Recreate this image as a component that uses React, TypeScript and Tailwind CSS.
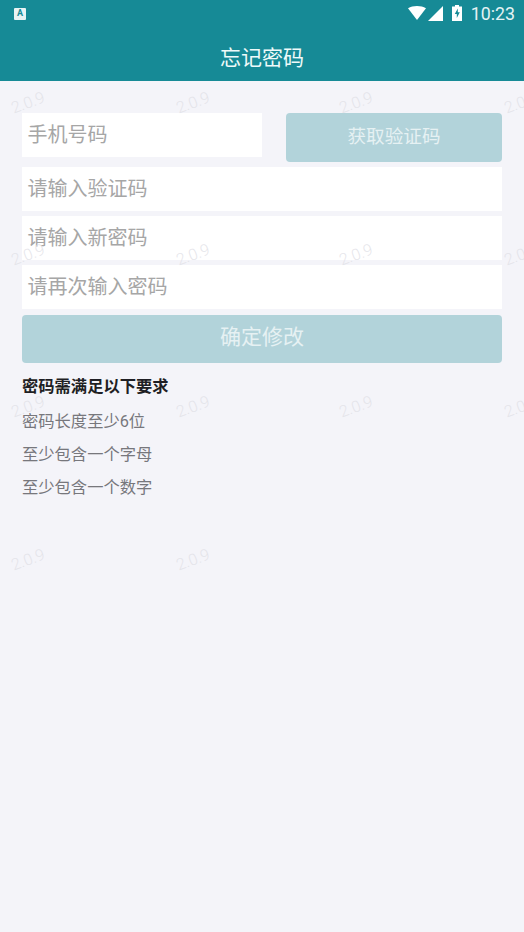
const cjk = "font-['Roboto','Noto_Sans_CJK_SC',sans-serif]";

const marks = [
  'left-[11px] top-[93px]',
  'left-[176px] top-[93px]',
  'left-[339px] top-[93px]',
  'left-[504px] top-[93px]',
  'left-[11px] top-[245px]',
  'left-[176px] top-[245px]',
  'left-[339px] top-[245px]',
  'left-[504px] top-[245px]',
  'left-[11px] top-[397px]',
  'left-[176px] top-[397px]',
  'left-[339px] top-[397px]',
  'left-[504px] top-[397px]',
  'left-[11px] top-[550px]',
  'left-[176px] top-[550px]',
];

function StatusBar() {
  return (
    <div className="flex h-[27px] items-center justify-between pl-[14px] pr-[9px]">
      {/* notification icon */}
      <div className="flex h-[12px] w-[12px] items-center justify-center rounded-[1px] bg-[#e8f3f4]">
        <span className="font-['Roboto',sans-serif] text-[9px] leading-none font-bold text-[#168a96]">A</span>
      </div>
      <div className="flex items-center">
        <svg width="18" height="14" viewBox="0 0 20 15" className="mr-[2px]" preserveAspectRatio="none">
          <path d="M0 2.500C2.800 0.900 6.200 0 10 0s7.200 0.900 10 2.500L10 15z" fill="#fff" />
        </svg>
        <svg width="15" height="15" viewBox="0 0 15 15" className="mr-[9px]">
          <path d="M15 0v15H0z" fill="#fff" />
        </svg>
        <svg width="10" height="16" viewBox="0 0 10 16" className="mr-[9px]">
          <path d="M3 0h4v1.500h3V16H0V1.500h3z" fill="#fff" />
          <path d="M5.800 3.500 2.800 9h2v4l3-5.800h-2z" fill="#168a96" />
        </svg>
        <span className="font-['Roboto',sans-serif] text-[17.8px] leading-none font-normal text-[#e4f3f4]">10:23</span>
      </div>
    </div>
  );
}

function Field({ placeholder, className }: { placeholder: string; className: string }) {
  return (
    <div className={`flex h-[44px] items-center bg-white pl-[5.500px] text-[20px] text-[#a6a6a6] ${className}`}>
      {placeholder}
    </div>
  );
}

export default function App() {
  return (
    <div className={`relative h-[932px] w-[524px] overflow-hidden bg-[#f4f4f9] ${cjk}`}>
      <header className="h-[81px] bg-[#168a96]">
        <StatusBar />
        <h1 className="mt-[13px] text-center text-[21px] leading-[36px] font-normal text-[#eefafa]">忘记密码</h1>
      </header>

      <main className="px-[22px] pt-[32px]">
        <div className="flex items-start justify-between">
          <Field placeholder="手机号码" className="w-[240px]" />
          <button className="h-[49px] w-[216px] rounded-[4px] bg-[#b2d3da] text-[18.600px] text-[#e6f1f3]">
            获取验证码
          </button>
        </div>
        <Field placeholder="请输入验证码" className="mt-[5px]" />
        <Field placeholder="请输入新密码" className="mt-[5px]" />
        <Field placeholder="请再次输入密码" className="mt-[5px]" />
        <button className="mt-[6px] h-[48px] w-full rounded-[4px] bg-[#b2d3da] pb-[3px] text-[21px] text-[#e6f1f3]">
          确定修改
        </button>
        <h2 className="mt-[12px] text-[16.300px] leading-[24px] font-bold text-[#1f1f24]">密码需满足以下要求</h2>
        <ul className="mt-[6px] flex flex-col text-[16.300px] leading-[33px] text-[#77777c]">
          <li>密码长度至少6位</li>
          <li>至少包含一个字母</li>
          <li>至少包含一个数字</li>
        </ul>
      </main>

      {/* version watermark */}
      {marks.map((m) => (
        <span
          key={m}
          className={`pointer-events-none absolute -rotate-[20deg] font-['Roboto',sans-serif] text-[16px] leading-[20px] font-light text-[#e0e0e6]/80 ${m}`}
        >
          2.0.9
        </span>
      ))}
    </div>
  );
}
